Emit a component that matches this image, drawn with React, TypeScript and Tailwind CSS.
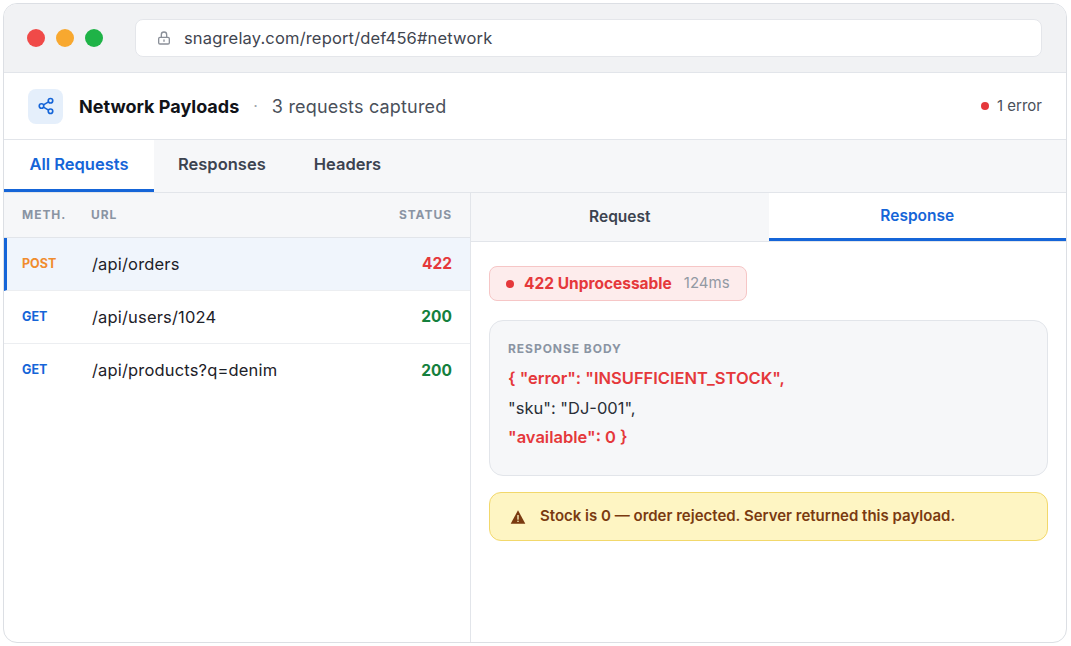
import React from "react";

export default function App() {
  const rows = [
    { m: "POST", mc: "text-[#f08c2e]", url: "/api/orders", s: "422", sc: "text-[#e5383b]", active: true },
    { m: "GET", mc: "text-[#1565d8]", url: "/api/users/1024", s: "200", sc: "text-[#15803d]" },
    { m: "GET", mc: "text-[#1565d8]", url: "/api/products?q=denim", s: "200", sc: "text-[#15803d]" },
  ];
  return (
    <div className="w-[1071px] h-[646px] bg-white p-[3px]" style={{ fontFamily: "Inter, 'Open Sans', sans-serif" }}>
      <div className="w-[1064px] h-[640px] rounded-[14px] border border-[#dcdfe4] overflow-hidden flex flex-col">
        <div className="h-[69px] bg-[#f1f2f4] border-b border-[#e2e5ea] flex items-center px-[23px] shrink-0">
          <div className="flex gap-[11px]">
            <span className="w-[18px] h-[18px] rounded-full bg-[#f04a48]" />
            <span className="w-[18px] h-[18px] rounded-full bg-[#f8a82f]" />
            <span className="w-[18px] h-[18px] rounded-full bg-[#1fb347]" />
          </div>
          <div className="ml-[32px] w-[907px] h-[38px] bg-white rounded-[8px] border border-[#e4e6ea] flex items-center pl-[20px] gap-[12px]">
            <svg width="16" height="16" viewBox="0 0 24 24" fill="none" stroke="#8a8f98" strokeWidth="2" strokeLinecap="round"><rect x="4" y="11" width="16" height="10" rx="2"/><path d="M8 11V7a4 4 0 0 1 8 0v4"/><path d="M12 15v2"/></svg>
            <span className="text-[16.5px] tracking-[0.01em] text-[#3f4550]">snagrelay.com/report/def456#network</span>
          </div>
        </div>
        <div className="h-[67px] border-b border-[#e2e5ea] flex items-center px-[24px] shrink-0">
          <div className="w-[35px] h-[35px] rounded-[8px] bg-[#e5effb] flex items-center justify-center">
            <svg width="18" height="18" viewBox="0 0 24 24" fill="none" stroke="#1565d8" strokeWidth="2.2"><circle cx="18" cy="5" r="3"/><circle cx="6" cy="12" r="3"/><circle cx="18" cy="19" r="3"/><path d="M8.6 13.5l6.8 4M15.4 6.5l-6.8 4"/></svg>
          </div>
          <span className="ml-[16px] text-[18px] font-bold text-[#111318]">Network Payloads</span>
          <span className="ml-[14px] text-[#a0a5ad]">·</span>
          <span className="ml-[14px] text-[18px] tracking-[0.01em] text-[#4a505a]">3 requests captured</span>
          <div className="ml-auto flex items-center gap-[8px] text-[15px] text-[#4a505a]">
            <span className="w-[8px] h-[8px] rounded-full bg-[#e5383b]" />1 error
          </div>
        </div>
        <div className="h-[53px] bg-[#f6f7f9] border-b border-[#e2e5ea] flex shrink-0 text-[16.5px] font-semibold">
          <div className="w-[150px] bg-white flex items-center justify-center text-[#1565d8] border-b-[3px] border-[#1565d8]">All Requests</div>
          <div className="px-[24px] pb-[3px] flex items-center text-[#3c4350]">Responses</div>
          <div className="px-[24px] pb-[3px] flex items-center text-[#3c4350]">Headers</div>
        </div>
        <div className="flex flex-1 min-h-0">
          <div className="w-[467px] border-r border-[#e2e5ea] flex flex-col">
            <div className="h-[45px] bg-[#f6f7f9] border-b border-[#e2e5ea] flex items-center px-[18px] text-[12px] font-bold tracking-[0.08em] text-[#8a94a3]">
              <span className="w-[69px]">METH.</span><span>URL</span><span className="ml-auto">STATUS</span>
            </div>
            {rows.map((r, i) => (
              <div key={i} className={`h-[53px] flex items-center pr-[18px] ${i < 2 ? "border-b border-[#eceef1]" : ""} ${r.active ? "bg-[#f0f5fc] border-l-[3px] border-l-[#1565d8] pl-[15px]" : "pl-[18px]"}`}>
                <span className={`w-[70px] text-[12.5px] font-bold ${r.mc}`}>{r.m}</span>
                <span className="text-[16.5px] tracking-[0.01em] text-[#1d2128]">{r.url}</span>
                <span className={`ml-auto text-[15.5px] font-bold ${r.sc}`}>{r.s}</span>
              </div>
            ))}
          </div>
          <div className="flex-1 flex flex-col">
            <div className="h-[49px] flex border-b border-[#e2e5ea] text-[15.5px] font-semibold">
              <div className="flex-1 bg-[#f6f7f9] flex items-center justify-center text-[#3c4350]">Request</div>
              <div className="flex-1 flex items-center justify-center text-[#1565d8] border-b-[3px] border-[#1565d8]">Response</div>
            </div>
            <div className="px-[18px] pt-[24px] flex flex-col">
              <div className="self-start h-[35px] px-[16px] rounded-[8px] bg-[#fdecec] border border-[#f6c6c6] flex items-center gap-[10px]">
                <span className="w-[8px] h-[8px] rounded-full bg-[#e5383b]" />
                <span className="text-[15.5px] font-bold text-[#e5383b]">422 Unprocessable</span>
                <span className="text-[15px] text-[#9299a3] ml-[2px]">124ms</span>
              </div>
              <div className="mt-[19px] h-[156px] rounded-[14px] bg-[#f6f7f9] border border-[#e2e5ea] px-[18px] pt-[19px]">
                <div className="text-[12px] font-bold tracking-[0.08em] text-[#8a94a3]">RESPONSE BODY</div>
                <div className="mt-[6px] text-[16.5px] leading-[29.5px]">
                  <div className="font-semibold text-[#e5383b]">{'{ "error": "INSUFFICIENT_STOCK",'}</div>
                  <div className="text-[#2a2f37]">{'"sku": "DJ-001",'}</div>
                  <div className="font-semibold text-[#e5383b]">{'"available": 0 }'}</div>
                </div>
              </div>
              <div className="mt-[16px] h-[49px] rounded-[12px] bg-[#fef5c3] border border-[#f2d86b] flex items-center px-[20px] gap-[14px]">
                <svg width="16" height="16" viewBox="0 0 24 24"><path d="M12 2L1 22h22L12 2z" fill="#7a3a10"/><rect x="11" y="9" width="2" height="7" fill="#fef5c3"/><rect x="11" y="17.5" width="2" height="2" fill="#fef5c3"/></svg>
                <span className="text-[15px] font-semibold text-[#7a3a10]">Stock is 0 — order rejected. Server returned this payload.</span>
              </div>
            </div>
          </div>
        </div>
      </div>
    </div>
  );
}
